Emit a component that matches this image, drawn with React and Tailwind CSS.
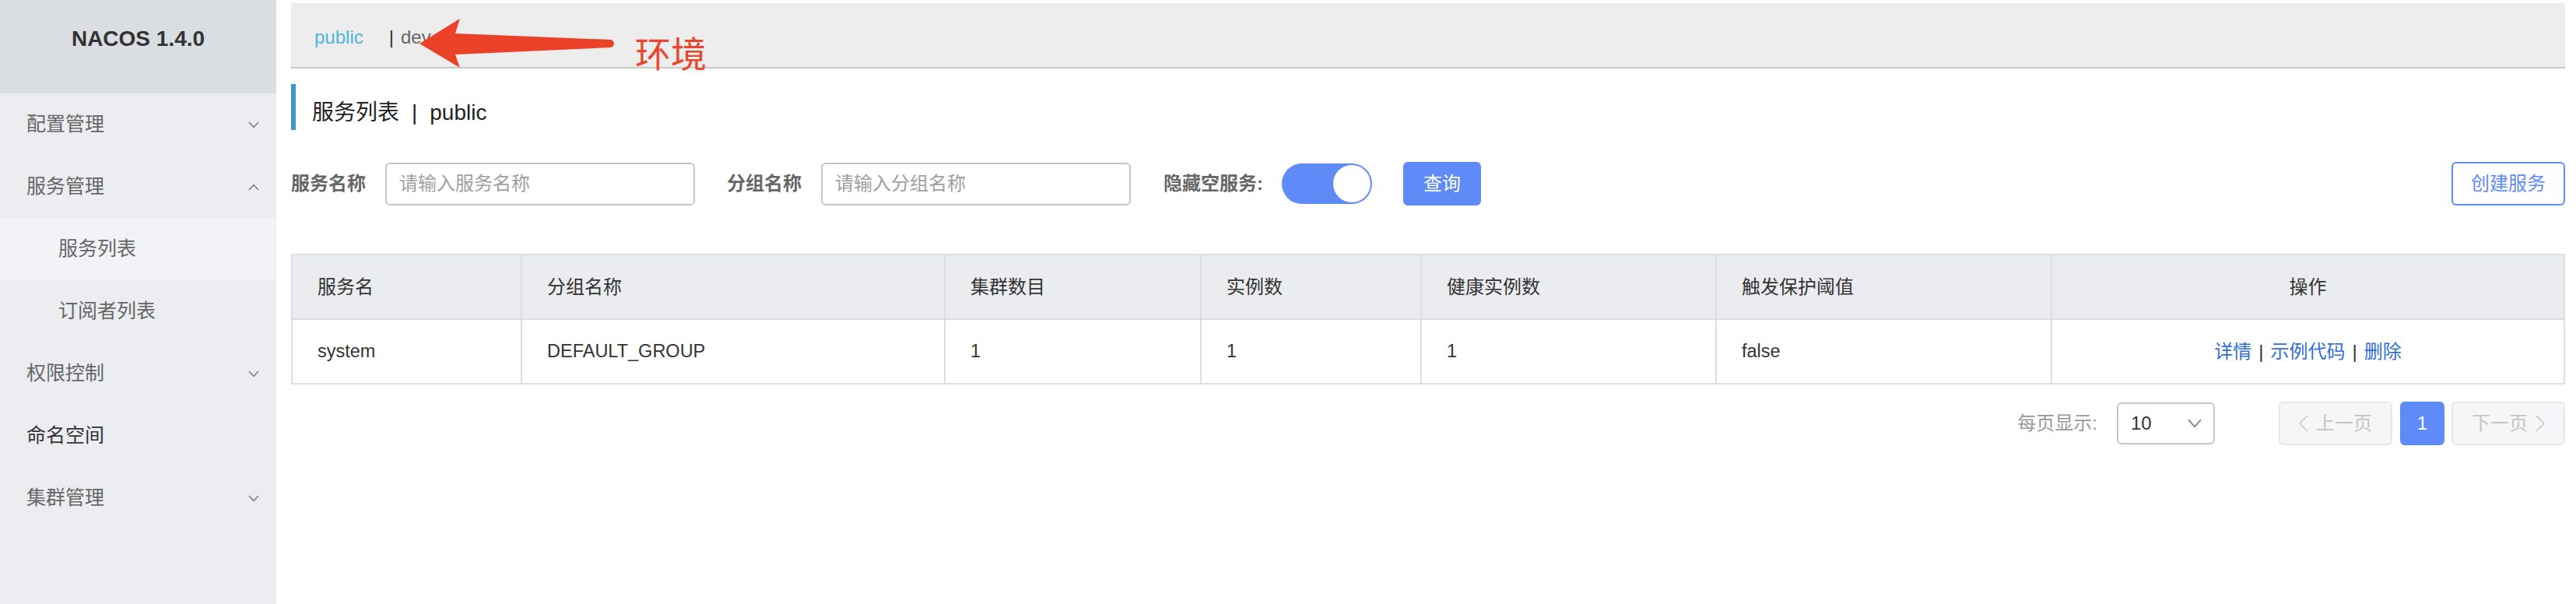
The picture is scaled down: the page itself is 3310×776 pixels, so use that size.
import React from "react";

const menu = [
  { label: "配置管理", arrow: "down" },
  { label: "服务管理", arrow: "up" },
  { label: "服务列表", sub: true, active: true },
  { label: "订阅者列表", sub: true },
  { label: "权限控制", arrow: "down" },
  { label: "命名空间", dark: true },
  { label: "集群管理", arrow: "down" },
];

const cols = [
  { title: "服务名", value: "system" },
  { title: "分组名称", value: "DEFAULT_GROUP" },
  { title: "集群数目", value: "1" },
  { title: "实例数", value: "1" },
  { title: "健康实例数", value: "1" },
  { title: "触发保护阈值", value: "false" },
];

function Chevron({ up, className = "" }) {
  return (
    <svg width="14" height="9" viewBox="0 0 14 9" className={className}>
      <polyline
        points={up ? "1,8 7,1.5 13,8" : "1,1 7,7.5 13,1"}
        fill="none"
        stroke="currentColor"
        strokeWidth="1.5"
      />
    </svg>
  );
}

function Sidebar() {
  return (
    <div className="w-[355px] h-[776px] shrink-0 bg-[#ebedf0]">
      {/* ==================== Logo ================== */}
      <div className="h-[120px] bg-[#dadde2] pt-[36px] text-center text-[28px] leading-[28px] font-bold text-[#333]">
        NACOS 1.4.0
      </div>

      {/* ==================== Menu ================== */}
      {menu.map((m) => (
        <div
          key={m.label}
          className={`h-[80px] flex items-center justify-between pr-[22px] text-[25px] ${
            m.sub ? "pl-[75px]" : "pl-[34px]"
          } ${m.active ? "bg-[#f2f3f7]" : ""} ${m.dark ? "text-[#333]" : "text-[#666]"}`}
        >
          <span>{m.label}</span>
          {m.arrow && <Chevron up={m.arrow === "up"} className="text-[#777]" />}
        </div>
      ))}
    </div>
  );
}

function Table() {
  return (
    <div className="mt-[62px] border-t-2 border-l-2 border-[#dcdee3] grid grid-cols-[295px_544px_329px_283px_379px_431px_659px] text-[24px] text-[#333]">
      {cols.map((c) => (
        <div
          key={c.title}
          className="h-[83px] bg-[#ebecf0] border-r-2 border-b-2 border-[#dcdee3] flex items-center pl-[32px]"
        >
          {c.title}
        </div>
      ))}
      <div className="h-[83px] bg-[#ebecf0] border-r-2 border-b-2 border-[#dcdee3] flex items-center justify-center">
        操作
      </div>

      {cols.map((c) => (
        <div
          key={c.title + "-v"}
          className="h-[83px] border-r-2 border-b-2 border-[#dcdee3] flex items-center pl-[32px] text-[23.5px]"
        >
          {c.value}
        </div>
      ))}
      <div className="h-[83px] border-r-2 border-b-2 border-[#dcdee3] flex items-center justify-center gap-[9px]">
        <span className="text-[#3070d6]">详情</span>
        <span>|</span>
        <span className="text-[#3070d6]">示例代码</span>
        <span>|</span>
        <span className="text-[#3070d6]">删除</span>
      </div>
    </div>
  );
}

function Pagination() {
  return (
    <div className="mt-[22px] h-[56px] flex items-center justify-end text-[24px]">
      <span className="text-[#999]">每页显示:</span>
      <div className="ml-[25px] w-[126px] h-[54px] border-2 border-[#c4c6cf] rounded-[6px] flex items-center justify-between pl-[16px] pr-[14px] text-[#333]">
        <span>10</span>
        <Chevron className="text-[#888] w-[20px] h-[12px]" />
      </div>
      <div className="ml-[82px] w-[146px] h-[56px] bg-[#f5f6f8] border-2 border-[#e6e7eb] rounded-[6px] flex items-center justify-center gap-[10px] text-[#c4c4c4]">
        <svg width="12" height="22" viewBox="0 0 12 22">
          <polyline points="11,1 1,11 11,21" fill="none" stroke="currentColor" strokeWidth="1.5" />
        </svg>
        <span>上一页</span>
      </div>
      <div className="ml-[10px] w-[57px] h-[56px] bg-[#5e8bf7] rounded-[6px] flex items-center justify-center text-white">
        1
      </div>
      <div className="ml-[9px] w-[146px] h-[56px] bg-[#f5f6f8] border-2 border-[#e6e7eb] rounded-[6px] flex items-center justify-center gap-[10px] text-[#c4c4c4]">
        <span>下一页</span>
        <svg width="12" height="22" viewBox="0 0 12 22">
          <polyline points="1,1 11,11 1,21" fill="none" stroke="currentColor" strokeWidth="1.5" />
        </svg>
      </div>
    </div>
  );
}

export default function App() {
  return (
    <div className="relative w-[3310px] h-[776px] flex bg-white font-['Liberation_Sans','Noto_Sans_CJK_SC',sans-serif]">
      <Sidebar />

      <div className="flex-1 pl-[19px] pr-[16px]">
        {/* ==================== Namespace bar ================== */}
        <div className="mt-[4px] h-[84px] bg-[#ededed] border-b-2 border-[#c8c8c8] flex items-center pt-[6px] pl-[30px] text-[24px]">
          <span className="text-[#4fb4d8]">public</span>
          <span className="ml-[33px] text-[#333]">|</span>
          <span className="ml-[9px] text-[#666]">dev</span>
        </div>

        {/* ==================== Title ================== */}
        <div className="mt-[20px] h-[59px] border-l-[6px] border-[#3f95c7] pl-[21px] pt-[14px] flex items-center text-[28px] text-[#222]">
          服务列表
          <span className="mx-[16px]">|</span>
          public
        </div>

        {/* ==================== Search form ================== */}
        <div className="mt-[41px] h-[56px] flex items-center text-[24px]">
          <span className="font-bold text-[#666]">服务名称</span>
          <input
            readOnly
            placeholder="请输入服务名称"
            className="ml-[25px] w-[398px] h-[55px] border-2 border-[#c4c6cf] rounded-[6px] px-[16px] text-[24px] outline-none placeholder:text-[#a0a0a0]"
          />
          <span className="ml-[41px] font-bold text-[#666]">分组名称</span>
          <input
            readOnly
            placeholder="请输入分组名称"
            className="ml-[25px] w-[398px] h-[55px] border-2 border-[#c4c6cf] rounded-[6px] px-[16px] text-[24px] outline-none placeholder:text-[#a0a0a0]"
          />
          <span className="ml-[42px] font-bold text-[#666]">隐藏空服务:</span>
          <div className="ml-[24px] w-[116px] h-[52px] rounded-full bg-[#5e8bf7] flex justify-end p-[2px]">
            <div className="w-[48px] h-[48px] rounded-full bg-white" />
          </div>
          <button className="ml-[40px] w-[100px] h-[56px] rounded-[6px] bg-[#5e8bf7] text-white">
            查询
          </button>
          <button className="ml-auto w-[146px] h-[56px] rounded-[6px] border-2 border-[#5e8bf7] text-[#5e8bf7] bg-white">
            创建服务
          </button>
        </div>

        <Table />
        <Pagination />
      </div>

      {/* ==================== Annotation ================== */}
      <svg
        className="absolute left-0 top-0 pointer-events-none"
        width="3310"
        height="110"
        viewBox="0 0 3310 110"
      >
        <path
          d="M539,56 L591,24 L585,43 L784,51 A5,5 0 0 1 784,61 L585,70 L591,87 Z"
          fill="#ea4129"
        />
      </svg>
      <div className="absolute left-[816px] top-[47px] text-[46px] leading-[46px] text-[#e9462e]">
        环境
      </div>
    </div>
  );
}
